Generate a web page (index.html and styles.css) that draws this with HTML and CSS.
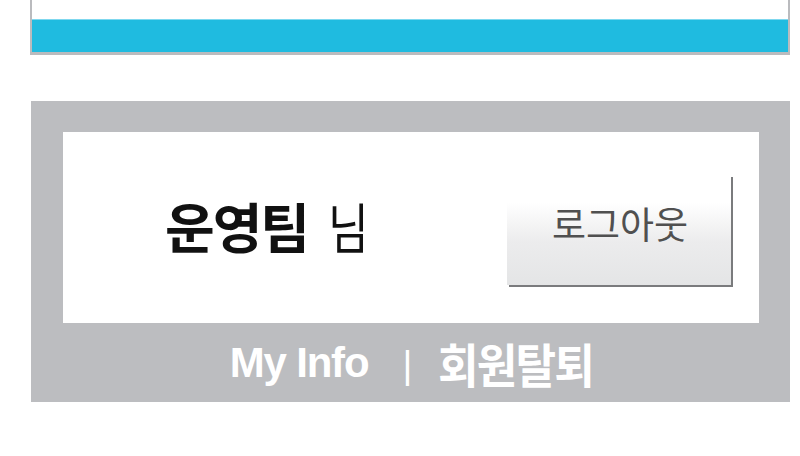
FILE: index.html
```html
<!DOCTYPE html>
<html>
<head>
  <title>회원 정보</title>
  <link rel="stylesheet" href="styles.css">
</head>
<body>
  <div class="top-box">
    <div class="top-space"></div>
    <div class="top-bar"></div>
  </div>

  <div class="member-panel">
    <div class="member-card">
      <div class="member-name"><strong>운영팀</strong><span class="suffix">님</span></div>
      <button type="button" class="logout-btn">로그아웃</button>
    </div>
    <div class="member-links">
      <a href="#" class="link-en">My Info</a>
      <span class="sep">|</span>
      <a href="#" class="link-ko">회원탈퇴</a>
    </div>
  </div>
</body>
</html>
```

FILE: styles.css
```css
body {
  margin: 0;
  padding: 0 10px 0 30px;
  background-color: #fff;
  font-family: "Noto Sans CJK KR", "Noto Sans", sans-serif;
}

.top-box {
  border: 2px solid #babbbe;
  border-top: none;
  border-bottom-width: 3px;
}

.top-space {
  height: 19px;
  background-color: #fff;
}

.top-bar {
  height: 32px;
  background-color: #1fbbe0;
  border-top: 1px solid #7fd8ef;
}

.member-panel {
  margin: 46px 0 0 1px;
  padding: 31px 31px 0 32px;
  background-color: #bcbdc0;
}

.member-card {
  display: flex;
  align-items: center;
  justify-content: space-between;
  height: 191px;
  padding: 0 28px 0 102px;
  background-color: #fff;
}

.member-name {
  display: flex;
  align-items: center;
  font-size: 54px;
  color: #111;
  letter-spacing: -2px;
  margin-top: -4px;
  white-space: nowrap;
}

.member-name strong {
  font-weight: 700;
}

/* the suffix is drawn narrower in the original */
.member-name .suffix {
  display: inline-block;
  margin-left: 20px;
  font-weight: 400;
  transform: scaleX(0.82);
  transform-origin: left center;
}

.logout-btn {
  width: 224px;
  height: 110px;
  margin-top: 4px;
  padding: 0 0 14px 2px;
  border: none;
  border-radius: 0;
  background: linear-gradient(to bottom, #fff 25%, #ececed 60%, #e4e5e6 100%);
  box-shadow: 2px 2px 0 #7a7b7d;
  color: #505050;
  font-family: "Noto Sans CJK KR", sans-serif;
  font-size: 37px;
  cursor: pointer;
}

.member-links {
  display: flex;
  justify-content: center;
  align-items: center;
  height: 79px;
  color: #fff;
}

.member-links a {
  color: #fff;
  text-decoration: none;
  font-weight: 700;
}

.link-en {
  font-family: "Liberation Sans", Arial, sans-serif;
  font-size: 42px;
  letter-spacing: -1.2px;
}

.link-ko {
  font-size: 47px;
  letter-spacing: -2px;
  transform: scaleX(0.94);
  transform-origin: left center;
  margin-right: -11px;
}

.sep {
  margin: 6px 26px 0 34px;
  font-family: "Liberation Sans", Arial, sans-serif;
  font-size: 38px;
  font-weight: 400;
}
```
